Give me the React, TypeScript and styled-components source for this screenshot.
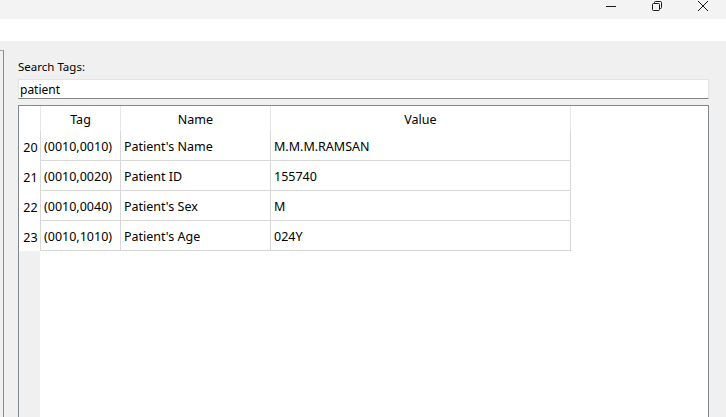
import React from "react";
import styled, { createGlobalStyle } from "styled-components";

const GlobalStyle = createGlobalStyle`
  html, body { margin: 0; padding: 0; }
  body {
    font-family: "Noto Sans", "Open Sans", Arial, sans-serif;
    background: #f0f0f0;
    overflow: hidden;
  }
`;

const Window = styled.div`
  width: 726px;
  height: 417px;
  display: flex;
  flex-direction: column;
  overflow: hidden;
  background: #f0f0f0;
`;

const TitleBar = styled.div`
  height: 19px;
  flex: none;
  background: #f3f3f3;
  display: flex;
  justify-content: flex-end;
  align-items: flex-start;
`;

const CaptionButton = styled.div`
  width: 46px;
  height: 12px;
  display: flex;
  align-items: center;
  justify-content: center;
  color: #1b1b1b;
`;

const MenuBand = styled.div`
  height: 22px;
  flex: none;
  background: #ffffff;
`;

const Main = styled.div`
  flex: 1;
  display: flex;
  min-height: 0;
`;

const LeftFrame = styled.div`
  width: 3px;
  margin-top: 9px;
  border-top: 1px solid #a0a0a0;
  border-right: 1px solid #8c8c8c;
  flex: none;
`;

const Panel = styled.div`
  flex: 1;
  display: flex;
  flex-direction: column;
  padding: 18px 17px 0 14px;
  min-width: 0;
`;

const Label = styled.div`
  font-size: 11.5px;
  line-height: 16px;
  height: 16px;
  color: #000;
`;

const SearchInput = styled.div`
  margin-top: 4px;
  height: 18px;
  background: #fff;
  border: 1px solid #e3e3e3;
  border-bottom-color: #858585;
  padding: 1px 0 0 1px;
  box-sizing: content-box;
  height: 17px;
  font-size: 12px;
  line-height: 17px;
  color: #000;
`;

const Table = styled.div`
  margin-top: 6px;
  height: 330px;
  flex: none;
  border: 1px solid #828790;
  background: #fff;
  display: flex;
  flex-direction: column;
  font-size: 12.5px;
  color: #000;
`;

const Columns = "21px 79px 149px 299px";

const HeaderRow = styled.div`
  display: grid;
  grid-template-columns: ${Columns};
  column-gap: 1px;
  background: #e8e8e8;
  width: 552px;
  height: 25px;
`;

const HeaderCell = styled.div`
  background: #fff;
  display: flex;
  align-items: center;
  justify-content: center;
  padding-top: 2px;
`;

const DataRow = styled.div`
  display: grid;
  grid-template-columns: ${Columns};
  column-gap: 1px;
  width: 552px;
  height: 30px;
  background: #d8d8d8;
`;

const RowNum = styled.div`
  background: #fff;
  display: flex;
  align-items: center;
  justify-content: center;
  padding: 2px 0 0 2px;
`;

const Cell = styled.div`
  background: #fff;
  display: flex;
  align-items: center;
  padding: 1px 0 0 3px;
  border-bottom: 1px solid #d8d8d8;
  white-space: nowrap;
`;

const Filler = styled.div`
  flex: 1;
  display: flex;
`;

const FillerHeader = styled.div`
  width: 21px;
  background: #f0f0f0;
`;

const rows = [
  ["20", "(0010,0010)", "Patient's Name", "M.M.M.RAMSAN"],
  ["21", "(0010,0020)", "Patient ID", "155740"],
  ["22", "(0010,0040)", "Patient's Sex", "M"],
  ["23", "(0010,1010)", "Patient's Age", "024Y"],
];

export default function App() {
  return (
    <>
      <GlobalStyle />
      <Window>
        <TitleBar>
          <CaptionButton>
            <svg width="10" height="10" viewBox="0 0 10 10">
              <line x1="0" y1="5.5" x2="10" y2="5.5" stroke="currentColor" strokeWidth="1" />
            </svg>
          </CaptionButton>
          <CaptionButton>
            <svg width="10" height="10" viewBox="0 0 10 10" fill="none" stroke="currentColor" strokeWidth="1">
              <rect x="0.5" y="2.5" width="7" height="7" rx="1" />
              <path d="M2.5 2.5 V1.5 a1 1 0 0 1 1 -1 H8.5 a1 1 0 0 1 1 1 V6.5 a1 1 0 0 1 -1 1 H7.5" />
            </svg>
          </CaptionButton>
          <CaptionButton>
            <svg width="10" height="10" viewBox="0 0 10 10" stroke="currentColor" strokeWidth="1">
              <line x1="0" y1="0" x2="10" y2="10" />
              <line x1="10" y1="0" x2="0" y2="10" />
            </svg>
          </CaptionButton>
        </TitleBar>
        <MenuBand />
        <Main>
          <LeftFrame />
          <Panel>
            <Label>Search Tags:</Label>
            <SearchInput>patient</SearchInput>
            <Table>
              <HeaderRow>
                <HeaderCell />
                <HeaderCell>Tag</HeaderCell>
                <HeaderCell>Name</HeaderCell>
                <HeaderCell>Value</HeaderCell>
              </HeaderRow>
              {rows.map((r) => (
                <DataRow key={r[0]}>
                  <RowNum>{r[0]}</RowNum>
                  <Cell>{r[1]}</Cell>
                  <Cell>{r[2]}</Cell>
                  <Cell>{r[3]}</Cell>
                </DataRow>
              ))}
              <Filler>
                <FillerHeader />
              </Filler>
            </Table>
          </Panel>
        </Main>
      </Window>
    </>
  );
}
